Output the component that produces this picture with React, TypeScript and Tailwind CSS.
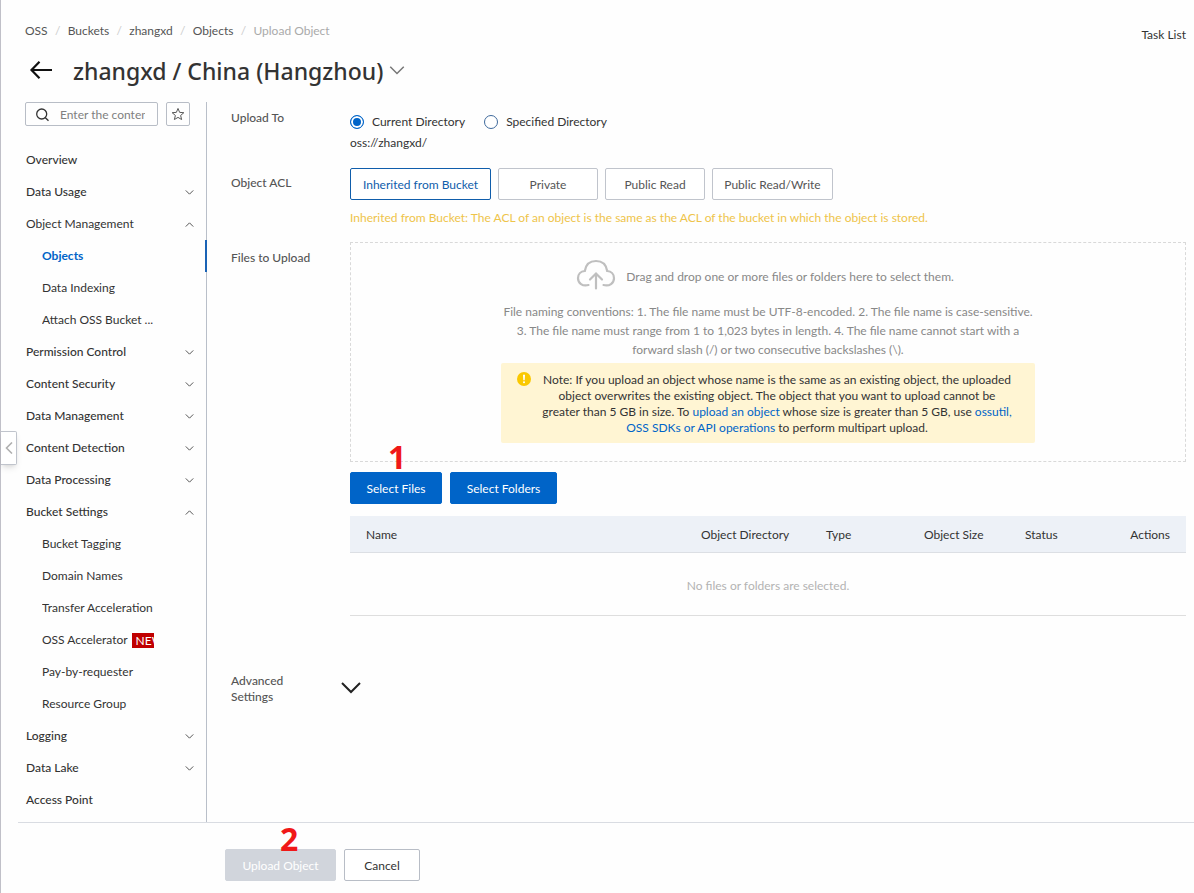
import { useState } from "react";
import clsx from "clsx";

type NavChild = { label: string; isNew?: boolean };
type NavSection = { label: string; state?: "open" | "closed"; plain?: boolean; children?: NavChild[] };

const sections: NavSection[] = [
  { label: "Overview" },
  { label: "Data Usage", state: "closed" },
  {
    label: "Object Management",
    state: "open",
    plain: true,
    children: [{ label: "Objects" }, { label: "Data Indexing" }, { label: "Attach OSS Bucket ..." }],
  },
  { label: "Permission Control", state: "closed" },
  { label: "Content Security", state: "closed" },
  { label: "Data Management", state: "closed" },
  { label: "Content Detection", state: "closed" },
  { label: "Data Processing", state: "closed" },
  {
    label: "Bucket Settings",
    state: "open",
    children: [
      { label: "Bucket Tagging" },
      { label: "Domain Names" },
      { label: "Transfer Acceleration" },
      { label: "OSS Accelerator", isNew: true },
      { label: "Pay-by-requester" },
      { label: "Resource Group" },
    ],
  },
  { label: "Logging", state: "closed" },
  { label: "Data Lake", state: "closed" },
  { label: "Access Point" },
];

const crumbs = ["OSS", "Buckets", "zhangxd", "Objects"];

const aclOptions = [
  { label: "Inherited from Bucket", width: "w-[141px]" },
  { label: "Private", width: "w-[100px]" },
  { label: "Public Read", width: "w-[100px]" },
  { label: "Public Read/Write", width: "w-[121px]" },
];

function Chevron({ up, className, stroke = 1 }: { up?: boolean; className: string; stroke?: number }) {
  return (
    <svg viewBox="0 0 20 12" fill="none" stroke="currentColor" className={className} aria-hidden="true">
      <path d={up ? "M1 11 10 2l9 9" : "M1 1l9 9 9-9"} strokeWidth={stroke} vectorEffect="non-scaling-stroke" />
    </svg>
  );
}

function Sidebar() {
  return (
    <aside className="w-[182px] shrink-0 border-r border-[#b9bfc9] pb-1.5">
      <div className="flex gap-2">
        <div className="flex h-6 w-[133px] items-center rounded-xs border border-[#b8bdc6] pt-0.5 pr-3 pl-2.5">
          <svg viewBox="0 0 14 14" className="size-3.5 shrink-0" fill="none" stroke="#333" strokeWidth="1.3" aria-hidden="true">
            <circle cx="5.700" cy="6" r="5" />
            <path d="M9.400 9.700 12.500 12.800" />
          </svg>
          <input
            type="text"
            aria-label="Search menu"
            placeholder="Enter the content"
            className="ml-2.5 w-0 flex-1 bg-transparent outline-none placeholder:text-[#808080]"
          />
        </div>
        <button type="button" aria-label="Favorite" className="flex size-6 items-center justify-center rounded-xs border border-[#b8bdc6]">
          <svg viewBox="0 0 24 24" className="size-3.5" fill="none" stroke="#555" strokeWidth="1.7" aria-hidden="true">
            <path d="m12 2.500 2.800 6.700 7.200.6-5.500 4.700 1.700 7L12 17.800l-6.200 3.700 1.700-7L2 9.800l7.200-.6z" />
          </svg>
        </button>
      </div>
      <nav className="mt-[18px]">
        {sections.map((s) => (
          <div key={s.label}>
            <a href="#" className={clsx("flex h-8 items-center justify-between pr-3 pl-px", !s.plain && "font-medium")}>
              {s.label}
              {s.state && <Chevron up={s.state === "open"} className="h-[5px] w-[9px] text-[#555]" />}
            </a>
            {s.children?.map((c) => (
              <a
                key={c.label}
                href="#"
                className={clsx(
                  "-mr-px flex h-8 items-center pl-[17px]",
                  c.label === "Objects" && "border-r-2 border-[#1a63b5] font-bold text-[#0064c8]"
                )}
              >
                <span className="flex w-28 items-center overflow-hidden whitespace-nowrap">
                  {c.label}
                  {c.isNew && <span className="ml-1 bg-[#c00000] px-1 leading-[15px] text-white">NEW</span>}
                </span>
              </a>
            ))}
          </div>
        ))}
      </nav>
    </aside>
  );
}

function Marker({ children, className }: { children: string; className: string }) {
  return (
    <span
      className={clsx(
        "pointer-events-none absolute font-['Open_Sans','Noto_Sans',sans-serif] text-[32px] leading-8 font-bold text-[#f01818]",
        className
      )}
    >
      {children}
    </span>
  );
}

const labelClass = "font-medium text-[#555]";
const buttonClass = "h-8 rounded-xs border pt-0.5 whitespace-nowrap";
const primaryClass = "border-[#0064c8] bg-[#0064c8] text-white";
const linkClass = "text-[#0064c8]";

function UploadForm() {
  const [target, setTarget] = useState("Current Directory");
  const [acl, setAcl] = useState("Inherited from Bucket");
  return (
    <form className="min-w-0 flex-1 pr-2 pl-6">
      <div className="grid grid-cols-[119px_minmax(0,1fr)] items-start">
        <span className={clsx(labelClass, "pt-2")}>Upload To</span>
        <div className="h-[66px] pt-3">
          <div className="flex gap-[19px]">
            {["Current Directory", "Specified Directory"].map((t) => (
              <label key={t} className="flex items-center gap-2">
                <input
                  type="radio"
                  name="target"
                  checked={target === t}
                  onChange={() => setTarget(t)}
                  className="size-3.5 appearance-none rounded-full border border-[#3f6a9c] bg-white checked:border-[#0064c8] checked:bg-[#0064c8] checked:shadow-[inset_0_0_0_2px_white]"
                />
                {t}
              </label>
            ))}
          </div>
          <p className="mt-[5px]">oss://zhangxd/</p>
        </div>

        <span className={clsx(labelClass, "pt-[7px]")}>Object ACL</span>
        <div className="h-[74px]">
          <div className="flex gap-[7px]">
            {aclOptions.map((o) => (
              <button
                key={o.label}
                type="button"
                onClick={() => setAcl(o.label)}
                className={clsx(
                  buttonClass,
                  "bg-white",
                  o.width,
                  acl === o.label ? "border-[#0f5dab] text-[#0f5dab]" : "border-[#c0c4cc] text-[#555]"
                )}
              >
                {o.label}
              </button>
            ))}
          </div>
          <p className="mt-2.5 text-[#eec44a]">
            Inherited from Bucket: The ACL of an object is the same as the ACL of the bucket in which the object is stored.
          </p>
        </div>

        <span className={clsx(labelClass, "pt-2")}>Files to Upload</span>
        <div>
          <div className="flex h-[220px] flex-col items-center border border-dashed border-[#d9d9d9] pt-4 text-center text-[#888]">
            <div className="flex items-center gap-2.5 pr-1.5">
              <svg viewBox="0 0 40 32" className="h-8 w-10" fill="none" stroke="#bfbfbf" strokeWidth="2.2" strokeLinecap="round" aria-hidden="true">
                <path d="M12.500 26C6.500 27.700 2 24 2 19.200c0-4 2.700-6.900 6.800-7.200C9.800 5.500 14.200 2 20 2s10.200 3.500 11.200 10c4.100.3 6.800 3.200 6.800 7.200 0 4.800-4.500 8.500-10.500 6.800" />
                <path d="M20 29.500V14.500M14 20.500l6-6 6 6" />
              </svg>
              <span className="pt-1">Drag and drop one or more files or folders here to select them.</span>
            </div>
            <p className="mt-[11px] leading-[19px]">
              File naming conventions: 1. The file name must be UTF-8-encoded. 2. The file name is case-sensitive.
              <br />
              3. The file name must range from 1 to 1,023 bytes in length. 4. The file name cannot start with a
              <br />
              forward slash (/) or two consecutive backslashes (\).
            </p>
            <div className="mt-1 flex w-[534px] rounded-xs bg-[#fff5d3] px-4 pt-[9px] pb-[7px] text-[#333]">
              <svg viewBox="0 0 14 14" className="size-3.5 shrink-0" aria-hidden="true">
                <circle cx="7" cy="7" r="7" fill="#fac800" />
                <path d="M6 2.800h2L7.700 8.200H6.300z" fill="#fff" />
                <circle cx="7" cy="10.200" r="1" fill="#fff" />
              </svg>
              <p className="flex-1 pl-1 whitespace-nowrap">
                Note: If you upload an object whose name is the same as an existing object, the uploaded
                <br />
                object overwrites the existing object. The object that you want to upload cannot be
                <br />
                greater than 5 GB in size. To <a href="#" className={linkClass}>upload an object</a> whose size is greater than 5 GB, use{" "}
                <a href="#" className={linkClass}>ossutil,</a>
                <br />
                <a href="#" className={linkClass}>OSS SDKs or API operations</a> to perform multipart upload.
              </p>
            </div>
          </div>
          <div className="relative mt-2.5 flex gap-2">
            <button type="button" className={clsx(buttonClass, primaryClass, "w-[92px]")}>Select Files</button>
            <button type="button" className={clsx(buttonClass, primaryClass, "w-[107px]")}>Select Folders</button>
            <Marker className="-top-[31px] left-[38px]">1</Marker>
          </div>
          <table className="mt-3 w-full table-fixed border-collapse text-left">
            <thead>
              <tr className="h-9 border-b border-[#dcdfe4] bg-[#edf1f7]">
                <th className="px-4 pt-0.5 font-normal">Name</th>
                <th className="w-[125px] px-4 pt-0.5 font-normal whitespace-nowrap">Object Directory</th>
                <th className="w-[98px] px-4 pt-0.5 font-normal">Type</th>
                <th className="w-[101px] px-4 pt-0.5 font-normal whitespace-nowrap">Object Size</th>
                <th className="w-[60px] px-4 pt-0.5 font-normal">Status</th>
                <th className="w-[117px] px-4 pt-0.5 text-right font-normal">Actions</th>
              </tr>
            </thead>
            <tbody>
              <tr className="h-[63px] border-b border-[#dedede]">
                <td colSpan={6} className="pt-1 text-center text-[#b3b3b3]">No files or folders are selected.</td>
              </tr>
            </tbody>
          </table>
        </div>

        <span className={clsx(labelClass, "mt-[57px] w-16")}>Advanced Settings</span>
        <button type="button" aria-label="Expand advanced settings" className="mt-16 -ml-[9px] w-5 py-0.5">
          <Chevron className="h-3 w-5 text-[#222]" stroke={2} />
        </button>
      </div>
    </form>
  );
}

export default function App() {
  return (
    <div className="relative flex min-h-screen flex-col border-l border-[#c0c0c8] bg-[#fefefe] font-['Lato','Noto_Sans',sans-serif] text-xs leading-4 text-[#333]">
      <header className="h-[102px] pt-[23px] pr-2 pl-6">
        <div className="flex items-start justify-between">
          <nav aria-label="Breadcrumb" className="flex">
            {crumbs.map((c) => (
              <span key={c} className="flex">
                <a href="#" className="text-[#555]">{c}</a>
                <span className="w-5 text-center text-[#ccc]">/</span>
              </span>
            ))}
            <span className="text-[#aaa]">Upload Object</span>
          </nav>
          <a href="#" className="mt-1">Task List</a>
        </div>
        <div className="mt-3 flex items-center">
          <button type="button" aria-label="Back" className="-mt-0.5 ml-1">
            <svg viewBox="0 0 24 20" className="h-5 w-6" fill="none" stroke="#111" strokeWidth="2.2" aria-hidden="true">
              <path d="M23 10H2.500M10.500 1.800 2.500 10l8 8.200" />
            </svg>
          </button>
          <h1 className="ml-5 font-['Noto_Sans',sans-serif] text-[23px] leading-8 font-medium">zhangxd / China (Hangzhou)</h1>
          <button type="button" aria-label="Switch bucket" className="-mt-0.5 ml-1.5">
            <Chevron className="h-[9px] w-4 text-[#777]" stroke={1.5} />
          </button>
        </div>
      </header>
      <div className="flex flex-1 pl-6">
        <Sidebar />
        <UploadForm />
      </div>
      <footer className="relative ml-[17px] flex h-[71px] gap-2 border-t border-[#d9dce2] pt-[26px] pl-[207px]">
        <button type="button" disabled className={clsx(buttonClass, "w-[111px] border-[#d1d5dc] bg-[#d1d5dc] text-white")}>
          Upload Object
        </button>
        <button type="button" className={clsx(buttonClass, "w-[76px] border-[#b8bdc6] bg-white")}>Cancel</button>
        <Marker className="top-0 left-[262px]">2</Marker>
      </footer>
      <button
        type="button"
        aria-label="Collapse sidebar"
        className="absolute top-[431px] left-0 flex h-[34px] w-4 items-center justify-center rounded-r-xs border border-l-0 border-[#c0c4cc] bg-white shadow-md"
      >
        <svg viewBox="0 0 8 12" className="h-3 w-2" fill="none" stroke="#b0b0b0" strokeWidth="1.6" aria-hidden="true">
          <path d="M7 .5 1.500 6 7 11.500" />
        </svg>
      </button>
    </div>
  );
}
